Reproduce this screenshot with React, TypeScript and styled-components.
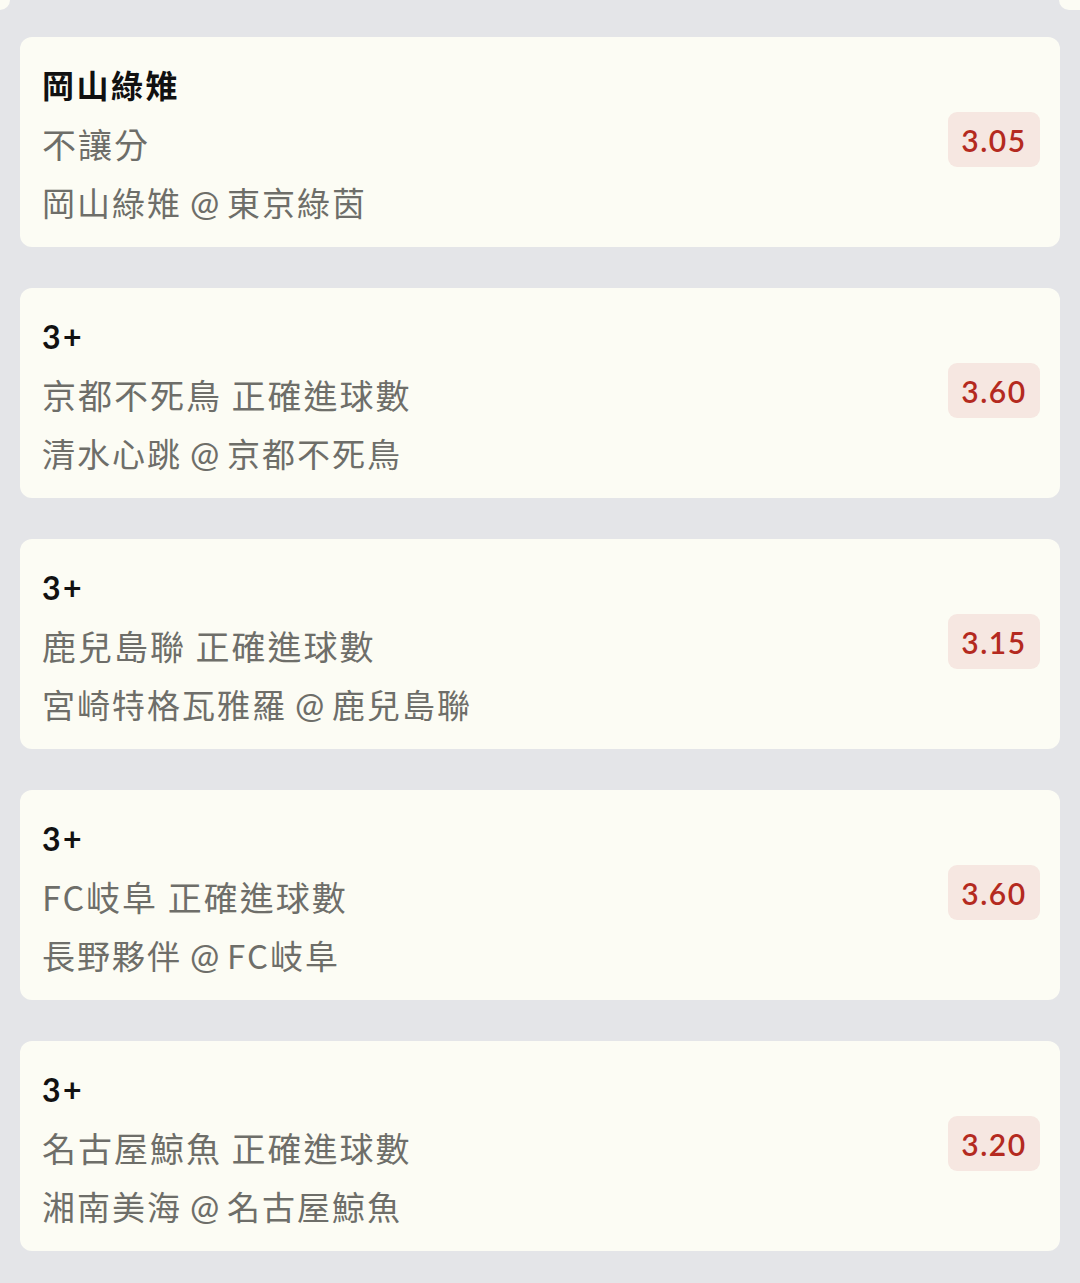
import React from 'react';
import styled, { createGlobalStyle } from 'styled-components';

const GlobalStyle = createGlobalStyle`
  html, body {
    margin: 0;
    padding: 0;
    background: #e4e5e8;
  }
  body {
    font-family: Lato, "Noto Sans CJK TC", "Noto Sans CJK SC", sans-serif;
  }
`;

const Page = styled.div`
  width: 1080px;
  min-height: 1283px;
  background: #e4e5e8;
  overflow: hidden;
`;

const TopEdge = styled.div`
  display: flex;
  justify-content: space-between;
  height: 10px;
`;

const Corner = styled.div<{ $side: 'left' | 'right' }>`
  width: ${(p) => (p.$side === 'left' ? '10px' : '21px')};
  height: 10px;
  background: #fcfcf4;
  border-bottom-right-radius: ${(p) => (p.$side === 'left' ? '10px' : '0')};
  border-bottom-left-radius: ${(p) => (p.$side === 'right' ? '14px' : '0')};
`;

const BetList = styled.div`
  display: flex;
  flex-direction: column;
  gap: 41px;
  padding: 27px 20px 32px;
`;

const BetCard = styled.div`
  display: flex;
  align-items: center;
  justify-content: space-between;
  height: 210px;
  box-sizing: border-box;
  padding: 20px 20px 16px 22px;
  background: #fcfcf4;
  border-radius: 12px;
`;

const BetInfo = styled.div`
  display: flex;
  flex-direction: column;
`;

const Selection = styled.div`
  font-size: 32px;
  line-height: 58px;
  font-weight: 700;
  color: #111111;
  letter-spacing: 2.5px;
`;

const Detail = styled.div<{ $compact?: boolean }>`
  font-family: "Noto Sans CJK TC", "Noto Sans CJK SC", sans-serif;
  font-size: ${(p) => (p.$compact ? '33px' : '34px')};
  line-height: 58px;
  font-weight: 400;
  color: #6e6e69;
  letter-spacing: 2px;
  white-space: nowrap;
  word-spacing: ${(p) => (p.$compact ? '-1.5px' : '0')};
`;

const At = styled.span`
  font-family: Lato, sans-serif;
  font-size: 35px;
  letter-spacing: 0;
`;

const Odds = styled.div`
  display: flex;
  align-items: center;
  justify-content: center;
  width: 92px;
  height: 55px;
  margin-bottom: 9px;
  border-radius: 9px;
  background: #f6e7e1;
  color: #b42a20;
  font-size: 30px;
  font-weight: 600;
  letter-spacing: 1.5px;
`;

interface Bet {
  id: number;
  selection: string;
  market: string;
  away: string;
  home: string;
  odds: string;
}

const bets: Bet[] = [
  { id: 1, selection: '岡山綠雉', market: '不讓分', away: '岡山綠雉', home: '東京綠茵', odds: '3.05' },
  { id: 2, selection: '3+', market: '京都不死鳥 正確進球數', away: '清水心跳', home: '京都不死鳥', odds: '3.60' },
  { id: 3, selection: '3+', market: '鹿兒島聯 正確進球數', away: '宮崎特格瓦雅羅', home: '鹿兒島聯', odds: '3.15' },
  { id: 4, selection: '3+', market: 'FC岐阜 正確進球數', away: '長野夥伴', home: 'FC岐阜', odds: '3.60' },
  { id: 5, selection: '3+', market: '名古屋鯨魚 正確進球數', away: '湘南美海', home: '名古屋鯨魚', odds: '3.20' },
];

const App = () => {
  return (
    <Page>
      <GlobalStyle />
      <TopEdge>
        <Corner $side="left" />
        <Corner $side="right" />
      </TopEdge>
      <BetList>
        {bets.map((bet) => (
          <BetCard key={bet.id}>
            <BetInfo>
              <Selection>{bet.selection}</Selection>
              <Detail>{bet.market}</Detail>
              <Detail $compact>
                {bet.away} <At>@</At> {bet.home}
              </Detail>
            </BetInfo>
            <Odds>{bet.odds}</Odds>
          </BetCard>
        ))}
      </BetList>
    </Page>
  );
};

export default App;
